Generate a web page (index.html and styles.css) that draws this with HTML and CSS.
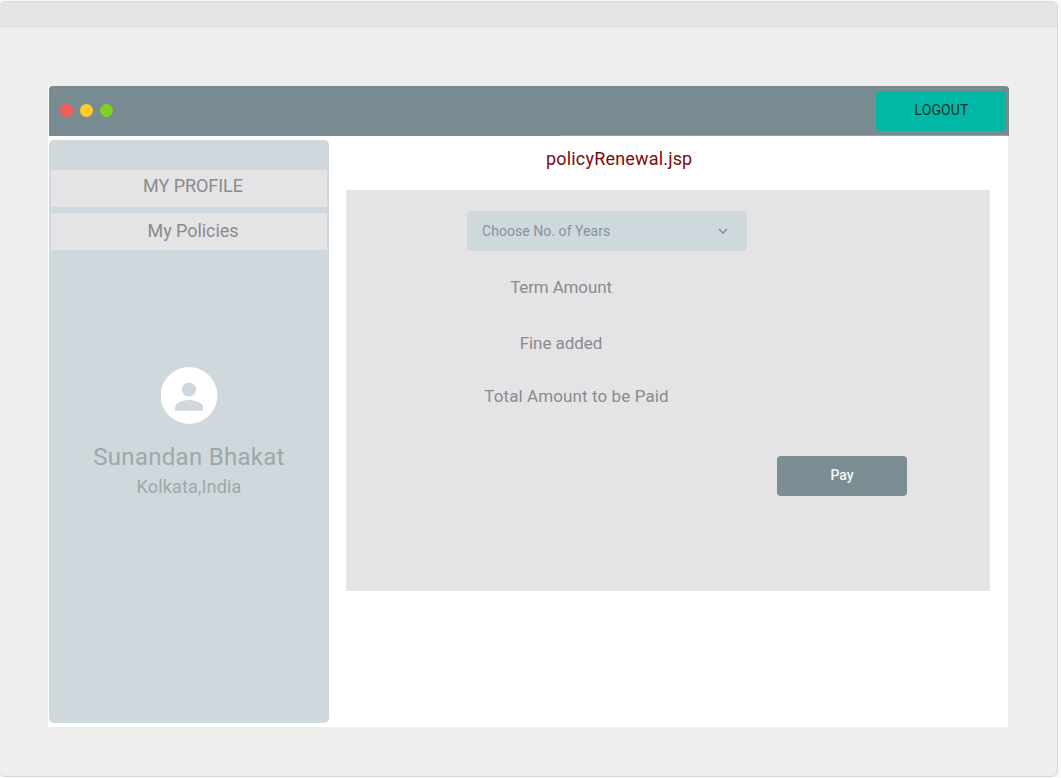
FILE: index.html
```html
<!DOCTYPE html>
<html lang="en">
<head>
<meta charset="utf-8">
<title>policyRenewal.jsp</title>
<link rel="stylesheet" href="styles.css">
</head>
<body>
<div class="frame">
  <div class="frame-bar"></div>
  <div class="window">
    <header class="titlebar">
      <div class="dots"><i class="dot red"></i><i class="dot yellow"></i><i class="dot green"></i></div>
      <button class="logout">LOGOUT</button>
    </header>
    <div class="content">
      <aside class="sidebar">
        <nav class="menu">
          <a class="menu-item first">MY PROFILE</a>
          <a class="menu-item">My Policies</a>
        </nav>
        <svg class="avatar" viewBox="0 0 57 57"><circle cx="28" cy="28.5" r="28.4" fill="#fff"/><circle cx="28" cy="22.5" r="7.1" fill="#cfd8dd"/><path d="M14 43.8v-3.6c0-4.7 9.3-7.2 14-7.2s14 2.5 14 7.2v3.6z" fill="#cfd8dd"/></svg>
        <div class="name">Sunandan Bhakat</div>
        <div class="place">Kolkata,India</div>
      </aside>
      <main class="main">
        <h1 class="title">policyRenewal.jsp</h1>
        <section class="panel">
          <div class="select"><span>Choose No. of Years</span>
            <svg class="chevron" viewBox="0 0 10 7"><path d="M1 1l4 4 4-4" fill="none" stroke="#87898a" stroke-width="1.5"/></svg>
          </div>
          <div class="row term">Term Amount</div>
          <div class="row fine">Fine added</div>
          <div class="row total">Total Amount to be Paid</div>
          <button class="pay">Pay</button>
        </section>
      </main>
    </div>
  </div>
</div>
</body>
</html>
```
FILE: styles.css
```css
* { box-sizing: border-box; }
body { margin: 0; height: 778px; padding-top: 1px; overflow: hidden; background: #f9f9f9; font-family: Roboto, "Liberation Sans", sans-serif; }
.frame { width: 1059px; height: 776px; margin-left: -1px; border: 1px solid #d9d9d9; border-radius: 6px; background: #eee; overflow: hidden; }
.frame-bar { height: 25px; background: #e4e4e4; border-bottom: 1px solid #d9d9d9; }
.window { width: 961px; height: 641px; margin: 59px 0 0 48px; background: linear-gradient(#fff, #fff) 0 1px / 960px 640px no-repeat; }
.titlebar { display: flex; align-items: center; justify-content: space-between; height: 50px; margin-left: 1px; padding: 0 3px 0 11px; background: linear-gradient(#93a3a7, #93a3a7) 100% 100% / 450px 1px no-repeat #788b90; border-radius: 4px 4px 0 0; }
.dots { display: flex; gap: 7px; padding-bottom: 1px; }
.dot { width: 13px; height: 13px; border-radius: 50%; }
.red { background: #f55d5d; }
.yellow { background: #ffcb2d; }
.green { background: #7ed321; }
button { border: 0; border-radius: 4px; width: 130px; height: 40px; padding: 0; font-family: inherit; font-size: 14px; }
.logout { background: #00b8a5; color: #123330; padding: 0 0 2px 1px; letter-spacing: 0.1px; }
.content { display: flex; padding: 4px 0 0 1px; }
.sidebar { width: 280px; height: 583px; padding-top: 30px; background: #cfd8dd; border-radius: 5px; text-align: center; color: #a0a7a9; }
.menu { display: flex; flex-direction: column; gap: 6px; padding: 0 2px; }
.menu-item { height: 37px; padding-left: 8px; line-height: 36px; background: #e4e4e6; color: #8b8b8c; font-size: 18px; letter-spacing: -0.05px; }
.first { line-height: 32px; }
.avatar { display: block; width: 57px; height: 57px; margin: 117px 0 0 112px; }
.name { margin-top: 18px; font-size: 24px; line-height: 30px; letter-spacing: 0.28px; }
.place { font-size: 18px; line-height: 30px; letter-spacing: 0.15px; }
.main { width: 644px; margin-left: 17px; }
.title { margin: 0; height: 50px; padding-left: 200px; font-size: 18px; font-weight: 400; line-height: 38px; letter-spacing: 0.18px; color: #7d0a0d; }
.panel { height: 401px; padding-top: 21px; background: #e4e4e6; color: #8b8b8c; font-size: 17px; }
.select { display: flex; align-items: center; justify-content: space-between; width: 280px; height: 40px; margin-left: 121px; padding: 0 19px 0 15px; border-radius: 4px; background: #cfd8dd; color: #83959a; font-size: 14px; letter-spacing: 0.05px; }
.chevron { width: 10px; height: 7px; }
.row { width: 230px; margin-left: 100px; line-height: 24px; text-align: center; white-space: nowrap; }
.term { margin-top: 24px; letter-spacing: -0.15px; }
.fine { margin-top: 32px; letter-spacing: -0.05px; }
.total { width: 261px; margin-top: 29px; letter-spacing: 0.1px; }
.pay { display: block; margin: 48px 0 0 431px; padding-bottom: 2px; background: #7b8d92; color: #f5f7f7; font-weight: 500; }
```
